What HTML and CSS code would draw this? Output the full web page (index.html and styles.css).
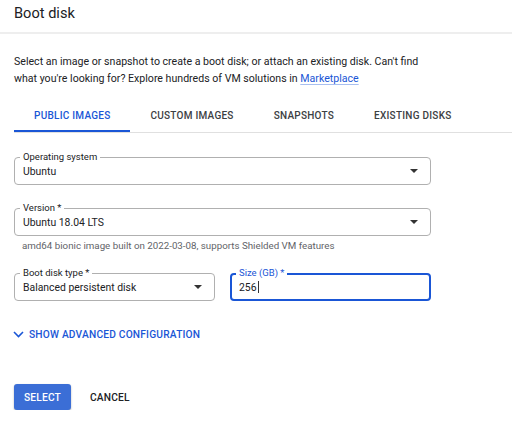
FILE: index.html
```html
<!DOCTYPE html>
<html>
<head>
<meta charset="utf-8">
<link rel="stylesheet" href="styles.css">
</head>
<body>
<div class="header"><h1 class="title">Boot disk</h1></div>
<div class="content">
  <p class="desc">Select an image or snapshot to create a boot disk; or attach an existing disk. Can't find<br>what you're looking for? Explore hundreds of VM solutions in <a class="link" href="#">Marketplace</a></p>
  <div class="tabs">
    <div class="tab active">PUBLIC IMAGES</div>
    <div class="tab">CUSTOM IMAGES</div>
    <div class="tab">SNAPSHOTS</div>
    <div class="tab">EXISTING DISKS</div>
  </div>
  <div class="field wide os">
    <span class="label">Operating system</span>
    <span class="value">Ubuntu</span>
    <span class="arrow"></span>
  </div>
  <div class="field wide version">
    <span class="label">Version *</span>
    <span class="value">Ubuntu 18.04 LTS</span>
    <span class="arrow"></span>
  </div>
  <div class="hint">amd64 bionic image built on 2022-03-08, supports Shielded VM features</div>
  <div class="row">
    <div class="field half">
      <span class="label">Boot disk type *</span>
      <span class="value">Balanced persistent disk</span>
      <span class="arrow"></span>
    </div>
    <div class="field half focused">
      <span class="label">Size (GB) *</span>
      <span class="value">256<span class="caret"></span></span>
    </div>
  </div>
  <div class="advanced">
    <svg class="chev" width="11" height="7" viewBox="0 0 11 7"><path d="M1 1 L5.5 5.5 L10 1" fill="none" stroke="#1a56d6" stroke-width="1.6"/></svg>
    <span>SHOW ADVANCED CONFIGURATION</span>
  </div>
  <div class="actions">
    <button class="btn primary">SELECT</button>
    <button class="btn plain">CANCEL</button>
  </div>
</div>
</body>
</html>
```
FILE: styles.css
```css
* { box-sizing: border-box; }
body {
  margin: 0;
  background: #fff;
  font-family: Roboto, "Liberation Sans", sans-serif;
  color: #202124;
}
.header {
  height: 34px;
  border-bottom: 2px solid #eeeeee;
  padding: 3px 14px 0;
}
.title {
  margin: 0;
  font-size: 14.6px;
  font-weight: 400;
  line-height: 20px;
  color: #202124;
}
.content {
  padding: 0 14px;
}
.desc {
  margin: 19px 0 0;
  font-size: 10.6px;
  line-height: 17px;
  color: #202124;
}
.link {
  color: #1a56d6;
  text-decoration: underline;
  text-decoration-color: #a8bff0;
  text-underline-offset: 2px;
}
.tabs {
  display: flex;
  margin-top: 14px;
  border-bottom: 1px solid #e0e0e0;
  margin-right: -14px;
}
.tab {
  padding: 0 20px;
  height: 31px;
  line-height: 29px;
  font-size: 10px;
  font-weight: 500;
  letter-spacing: 0.25px;
  color: #3c4043;
  border-bottom: 2px solid transparent;
}
.tab.active {
  color: #1a56d6;
  border-bottom-color: #1a56d6;
}
.field {
  position: relative;
  height: 28px;
  border: 1px solid #b0b0b0;
  border-radius: 4px;
  display: flex;
  align-items: center;
  padding: 0 8px;
}
.field.wide { width: 417px; }
.os { margin-top: 24px; }
.version { margin-top: 23px; }
.label {
  position: absolute;
  top: -7px;
  left: 5px;
  padding: 0 3px;
  background: #fff;
  font-size: 9.5px;
  line-height: 12px;
  color: #202124;
}
.value {
  font-size: 10.4px;
  color: #202124;
  flex: 1;
  display: flex;
  align-items: center;
}
.arrow {
  width: 0;
  height: 0;
  border-left: 4px solid transparent;
  border-right: 4px solid transparent;
  border-top: 4px solid #333;
  margin-right: 4px;
}
.hint {
  margin: 4px 0 0 8px;
  font-size: 9.75px;
  line-height: 12px;
  color: #5f6368;
}
.row {
  display: flex;
  gap: 15px;
  margin-top: 21px;
}
.field.half { width: 201px; }
.field.focused {
  border: 2px solid #1a56d6;
  padding: 0 7px;
}
.field.focused .label {
  color: #1a56d6;
  top: -8px;
  left: 4px;
}
.caret {
  display: inline-block;
  width: 1px;
  height: 12px;
  background: #333;
  margin-left: 1px;
}
.advanced {
  display: flex;
  align-items: center;
  gap: 5px;
  margin-top: 28px;
  font-size: 10.2px;
  font-weight: 500;
  color: #1a56d6;
  letter-spacing: 0.2px;
}
.chev { margin-left: -1px; }
.actions {
  display: flex;
  align-items: center;
  margin-top: 44px;
  gap: 19px;
}
.btn {
  font-family: Roboto, "Liberation Sans", sans-serif;
  font-size: 10.2px;
  font-weight: 500;
  letter-spacing: 0.2px;
  border: none;
  padding: 0;
  height: 26px;
  background: none;
}
.btn.primary {
  width: 57px;
  background: #3b6ed6;
  color: #fff;
  border-radius: 3px;
  box-shadow: 0 1px 2px rgba(0,0,0,0.3);
}
.btn.plain {
  color: #202124;
}
```
